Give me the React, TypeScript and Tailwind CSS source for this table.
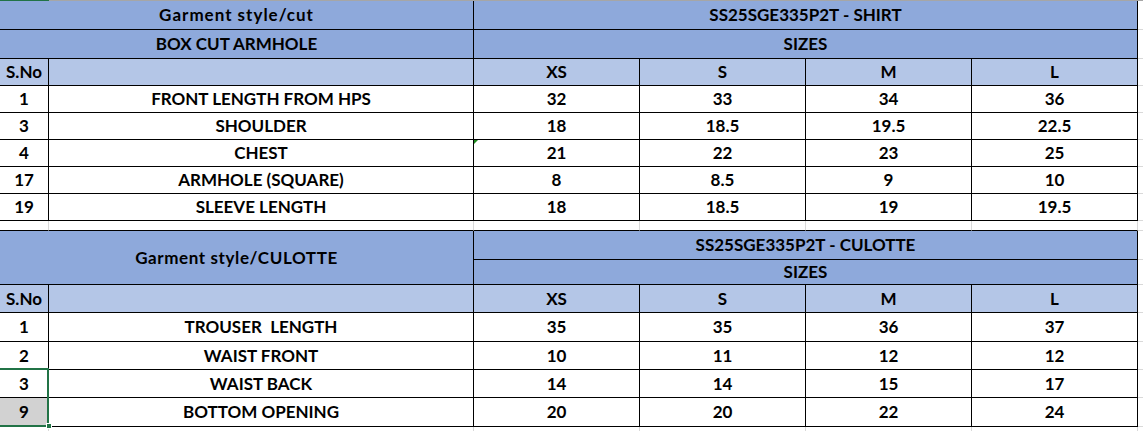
import React from 'react'

const grid = "grid grid-cols-[49px_425px_166px_166px_166px_166px_1fr]"

type CellProps = {
  children?: React.ReactNode
  className?: string
}

const Cell: React.FC<CellProps> = ({ children, className = "" }) => (
  <div className={`relative flex items-center justify-center border-r border-b border-black whitespace-pre ${className}`}>
    {children}
  </div>
)

// light grey sheet gridline cell to the right of the tables
const Edge: React.FC<{ className?: string }> = ({ className = "" }) => (
  <div className={`border-b border-[#d9d9d9] ${className}`} />
)

const sizes = ["XS", "S", "M", "L"]

const shirtRows = [
  { no: "1", name: "FRONT LENGTH FROM HPS", vals: ["32", "33", "34", "36"] },
  { no: "3", name: "SHOULDER", vals: ["18", "18.5", "19.5", "22.5"] },
  { no: "4", name: "CHEST", vals: ["21", "22", "23", "25"] },
  { no: "17", name: "ARMHOLE (SQUARE)", vals: ["8", "8.5", "9", "10"] },
  { no: "19", name: "SLEEVE LENGTH", vals: ["18", "18.5", "19", "19.5"] },
]

const culotteRows = [
  { no: "1", name: "TROUSER  LENGTH", vals: ["35", "35", "36", "37"] },
  { no: "2", name: "WAIST FRONT", vals: ["10", "11", "12", "12"] },
  { no: "3", name: "WAIST BACK", vals: ["14", "14", "15", "17"] },
  { no: "9", name: "BOTTOM OPENING", vals: ["20", "20", "22", "24"] },
]

const culotteHeights = ["h-[29px]", "h-[28px]", "h-[28px]", "h-[29px]"]

export default function App() {
  return (
    <div
      className="relative w-[1143px] h-[431px] overflow-hidden bg-white text-[17px] font-bold text-black"
      style={{ fontFamily: "Lato, 'Open Sans', sans-serif" }}
    >
      {/* sheet column header edge */}
      <div className="flex h-px">
        <div className="w-[49px] bg-[#217346]" />
        <div className="flex-1 bg-[#a6a6a6]" />
      </div>

      {/* shirt table */}
      <div className={`${grid} grid-rows-[29px_29px_27px_27px_27px_27px_27px_27px]`}>
        <Cell className="col-span-2 bg-[#8ea9db] tracking-[1px]">Garment style/cut</Cell>
        <Cell className="col-span-4 bg-[#8ea9db]">SS25SGE335P2T - SHIRT</Cell>
        <Edge />
        <Cell className="col-span-2 bg-[#8ea9db]">BOX CUT ARMHOLE</Cell>
        <Cell className="col-span-4 bg-[#8ea9db]">SIZES</Cell>
        <Edge />
        <Cell className="bg-[#b4c6e7]">S.No</Cell>
        <Cell className="bg-[#b4c6e7]" />
        {sizes.map((s) => (
          <Cell key={s} className="bg-[#b4c6e7]">{s}</Cell>
        ))}
        <Edge />
        {shirtRows.map((r) => (
          <React.Fragment key={r.no}>
            <Cell>{r.no}</Cell>
            <Cell>{r.name}</Cell>
            {r.vals.map((v, i) => (
              <Cell key={i}>
                {r.no === "4" && i === 0 && (
                  <span className="absolute top-0 left-0 w-0 h-0 border-t-[4px] border-t-[#1e8a1e] border-r-[4px] border-r-transparent" />
                )}
                {v}
              </Cell>
            ))}
            <Edge />
          </React.Fragment>
        ))}
      </div>

      {/* blank sheet row */}
      <div className={`${grid} h-[10px]`}>
        {[0, 1, 2, 3, 4, 5].map((i) => (
          <div key={i} className="border-r border-r-[#d9d9d9] border-b border-b-black" />
        ))}
        <Edge />
      </div>

      {/* culotte table */}
      <div className={`${grid} grid-rows-[29px_25px_28px]`}>
        <Cell className="col-span-2 row-span-2 bg-[#8ea9db] tracking-[0.6px]">Garment style/CULOTTE</Cell>
        <Cell className="col-span-4 bg-[#8ea9db]">SS25SGE335P2T - CULOTTE</Cell>
        <Edge />
        <Cell className="col-span-4 bg-[#8ea9db]">SIZES</Cell>
        <Edge />
        <Cell className="bg-[#b4c6e7]">S.No</Cell>
        <Cell className="bg-[#b4c6e7]" />
        {sizes.map((s) => (
          <Cell key={s} className="bg-[#b4c6e7]">{s}</Cell>
        ))}
        <Edge />
      </div>
      {culotteRows.map((r, idx) => (
        <div key={r.no} className={`${grid} ${culotteHeights[idx]}`}>
          <Cell className={r.no === "9" ? "bg-[#d2d2d2]" : ""}>{r.no}</Cell>
          <Cell>{r.name}</Cell>
          {r.vals.map((v, i) => (
            <Cell key={i}>{v}</Cell>
          ))}
          <Edge />
        </div>
      ))}

      {/* rest of the sheet */}
      <div className={`${grid} h-[4px]`}>
        {[0, 1, 2, 3, 4, 5].map((i) => (
          <div key={i} className="border-r border-[#d9d9d9]" />
        ))}
        <div />
      </div>

      {/* selection range */}
      <div className="absolute left-[-2px] top-[368px] w-[51px] h-[59px] border-2 border-[#217346]" />
      <div className="absolute left-[46px] top-[423px] w-[6px] h-[6px] bg-[#217346] border border-white" />
    </div>
  )
}
